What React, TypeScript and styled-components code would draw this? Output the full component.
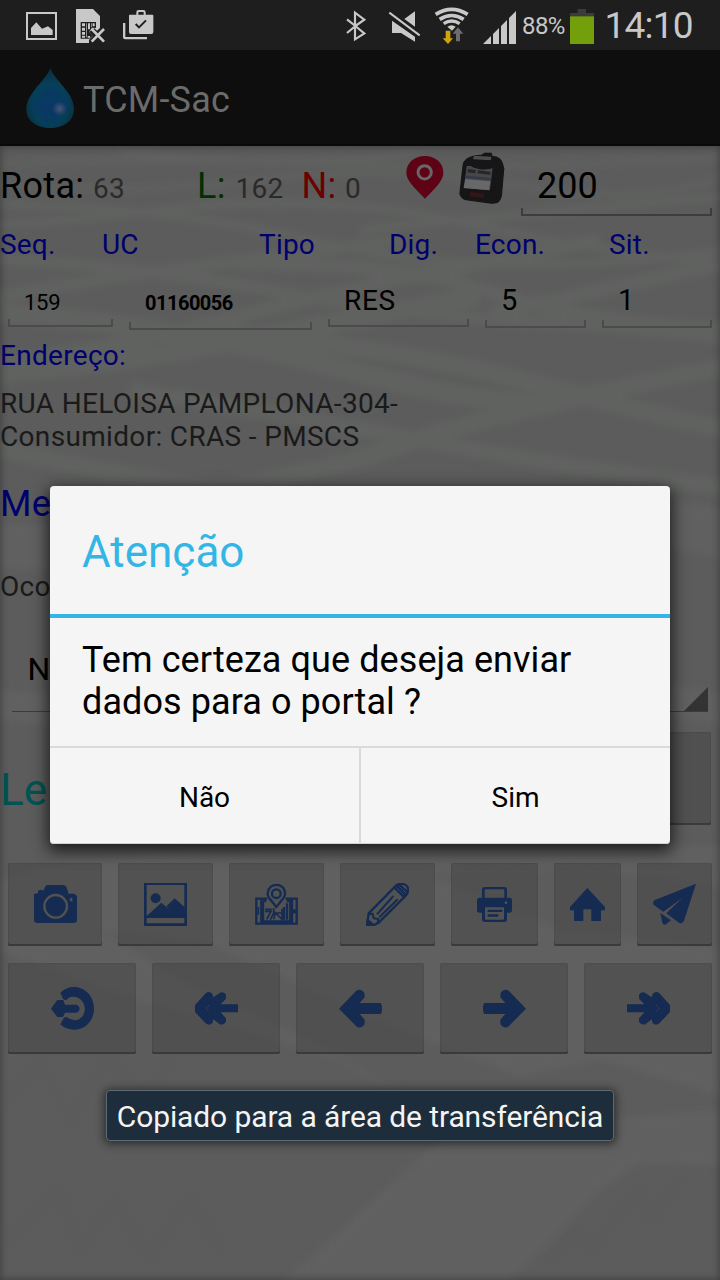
import React from "react";
import styled, { createGlobalStyle } from "styled-components";

const GlobalStyle = createGlobalStyle`
  *, *::before, *::after { box-sizing: border-box; }
  html, body { margin: 0; padding: 0; background: #5c5c5c; }
  body { font-family: Roboto, "Liberation Sans", sans-serif; overflow: hidden; }
  button { font: inherit; color: inherit; border: 0; padding: 0; margin: 0; background: none; }
`;

const NAVY = "#152b52";

const Phone = styled.div`
  position: relative;
  width: 720px;
  height: 1280px;
  overflow: hidden;
  display: flex;
  flex-direction: column;
`;

const StatusBar = styled.header`
  display: flex;
  height: 50px;
  flex: none;
  background: #1e1e1e;
  color: #c8c8c8;
  svg { display: block; flex: none; }
`;

const Percent = styled.span`
  width: 48px;
  font-size: 24px;
  line-height: 53px;
  letter-spacing: -0.6px;
  white-space: nowrap;
`;

const Clock = styled.span`
  margin-left: 10.5px;
  font-size: 37px;
  line-height: 51px;
  letter-spacing: -0.8px;
  white-space: nowrap;
`;

const ActionBar = styled.div`
  display: flex;
  align-items: center;
  height: 96px;
  flex: none;
  padding: 2px 0 0 25px;
  background: #0e0e0e;
  border-bottom: 2px solid #090909;
`;

const AppTitle = styled.h1`
  margin: 3px 0 0 8px;
  font-size: 36px;
  font-weight: 400;
  line-height: 42px;
  letter-spacing: 0.2px;
  color: #6b6b6b;
`;

const Content = styled.main`
  position: relative;
  flex: 1;
  display: flex;
  flex-direction: column;
  background: #5b5c5b;
  &::after {
    content: "";
    position: absolute;
    inset: 0;
    pointer-events: none;
    box-shadow: inset 0 0 7px 1px rgba(30, 30, 30, 0.45);
  }
`;

const Backdrop = styled.svg`
  position: absolute;
  inset: 0;
`;

const Form = styled.div`
  position: relative;
  display: flex;
  flex-direction: column;
`;

const Text = styled.span<{ $size?: number; $color?: string; $bold?: boolean; $track?: number }>`
  display: block;
  font-size: ${(p) => p.$size ?? 28}px;
  line-height: ${(p) => Math.round((p.$size ?? 28) * 1.1719)}px;
  font-weight: ${(p) => (p.$bold ? 700 : 400)};
  letter-spacing: ${(p) => p.$track ?? 0.3}px;
  color: ${(p) => p.$color ?? "#1a1a1a"};
  white-space: nowrap;
`;

const CounterRow = styled.div`
  display: grid;
  grid-template-columns: 93px 104px 38.5px 66px 43.5px 61px 52px 63px 191px;
  align-items: baseline;
  height: 70px;
  padding-top: 19px;
  svg { display: block; align-self: start; }
`;

const Field = styled.div<{ $indent: number; $h: number; $strong?: boolean }>`
  position: relative;
  display: flex;
  align-items: baseline;
  height: ${(p) => p.$h}px;
  padding-left: ${(p) => p.$indent}px;
  &::after {
    content: "";
    position: absolute;
    left: 0;
    right: 0;
    bottom: 0;
    height: 8px;
    border: solid ${(p) => (p.$strong ? "#3d3d3d" : "#4b4b4b")};
    border-width: 0 2px 2px;
  }
`;

const LabelRow = styled.div`
  display: grid;
  grid-template-columns: 102px 157px 130px 86px 134px 1fr;
  margin-top: 12px;
`;

const ValueRow = styled.div`
  display: grid;
  grid-template-columns: 105px 183px 141px 101px 110px;
  column-gap: 16px;
  align-items: baseline;
  height: 54px;
  margin: 22px 0 0 8px;
`;

const Block = styled.div<{ $top: number; $left?: number }>`
  margin-top: ${(p) => p.$top}px;
  margin-left: ${(p) => p.$left ?? 0}px;
`;

const Spinner = styled.div`
  display: flex;
  justify-content: space-between;
  align-items: flex-end;
  height: 62px;
  margin: 47px 12px 0;
  padding-left: 15.5px;
  border-bottom: 1px solid #3c3c3c;
  svg { display: block; }
`;

const SpinnerText = styled(Text)`
  align-self: flex-start;
`;

const ReadingRow = styled.div`
  display: flex;
  justify-content: space-between;
  align-items: flex-start;
  margin: 20px 9px 0 0;
  height: 93px;
`;

const ReadingLabel = styled(Text)`
  margin-top: 32px;
`;

const Key = styled.button`
  display: flex;
  align-items: center;
  justify-content: center;
  background: rgba(66, 66, 66, 0.48);
  border-radius: 2px;
  box-shadow: inset 0 -2px 0 #3a3a3a, inset 0 0 1px 1px rgba(50, 50, 50, 0.15);
  svg { display: block; flex: none; }
`;

const ReadingKey = styled(Key)`
  width: 320px;
  height: 93px;
`;

const ToolRow = styled.nav`
  display: grid;
  grid-template-columns: 94px 95px 95px 95px 87px 67px 75px;
  column-gap: 16px;
  height: 83px;
  margin: 38px 8px 0;
`;

const NavRow = styled.nav`
  display: grid;
  grid-template-columns: repeat(5, 128px);
  column-gap: 16px;
  height: 91px;
  margin: 17px 8px 0;
`;

const Dialog = styled.section`
  position: absolute;
  left: 50px;
  top: 486px;
  width: 620px;
  height: 358px;
  display: flex;
  flex-direction: column;
  background: #f5f5f5;
  border-radius: 4px;
  box-shadow: 0 5px 16px 2px rgba(0, 0, 0, 0.7), inset 0 -1px 0 #d2d2d2;
`;

const DialogTitle = styled.h2`
  margin: 0;
  height: 132px;
  padding: 40px 32px 0;
  font-size: 44px;
  line-height: 52px;
  font-weight: 400;
  color: #33b5e5;
  border-bottom: 4px solid #33b5e5;
`;

const DialogMessage = styled.p`
  margin: 0;
  height: 128px;
  padding: 21px 32px 0;
  font-size: 36px;
  line-height: 42px;
  letter-spacing: 0.08px;
  color: #000;
  white-space: nowrap;
`;

const DialogActions = styled.div`
  display: grid;
  grid-template-columns: 1fr 1fr;
  flex: 1;
  border-top: 2px solid #dadada;
`;

const DialogButton = styled.button`
  font-size: 28px;
  line-height: 33px;
  color: #000;
  padding-top: 2px;
  &:first-child { border-right: 1px solid #dadada; }
  & + & { border-left: 1px solid #dadada; }
`;

const Toast = styled.div`
  position: absolute;
  left: 106px;
  top: 1090px;
  width: 508px;
  height: 51px;
  display: flex;
  align-items: center;
  justify-content: center;
  padding-top: 2px;
  border: 1px solid #5d6a74;
  border-radius: 4px;
  background: #1e2d3b;
  color: #f4f4f4;
  font-size: 30px;
  line-height: 35px;
  letter-spacing: -0.11px;
  white-space: nowrap;
  box-shadow: 0 1px 9px 2px rgba(20, 20, 20, 0.65);
`;

const NotificationIcons = () => (
  <svg width="346" height="50" viewBox="0 0 1038 150" fill="#c8c8c8">
    <path fillRule="evenodd" d="M78 36H171V120H78ZM84 42V114H165V42Z" />
    <path d="M93 105V84L109 67L126 86L144 79L158 90V105Z" />
    <path d="M228 27H279L300 48V84L291 92L283 85L267 96L278 108L267 120V129H228Z" />
    <path fill="#1e1e1e" d="M242 66H288V84L276 83L267 96L278 107L268 116H242Z" />
    <path d="M246 70H255V79H246ZM259 70H261V112H259ZM264 70H270V88H264ZM273 70H275V82H273ZM278 70H284V79H278ZM246 83H255V92H246ZM246 96H255V104H246ZM246 107H255V113H246ZM263 108H270V113H263Z" />
    <path stroke="#c8c8c8" strokeWidth="8" d="M275 87L312 125M312 87L275 125" />
    <path fillRule="evenodd" d="M389 44H409V37Q409 30 416 30H430Q437 30 437 37V44H457Q460 44 460 47V96Q460 102 454 102H393Q387 102 387 96V47Q387 44 389 44ZM415 44H431V37Q431 36 429 36H417Q415 36 415 38Z" />
    <path fill="none" stroke="#1e1e1e" strokeWidth="6" d="M407 72L417 82L438 61" />
    <path d="M369 69H376V111H441V118H375Q369 118 369 112Z" />
  </svg>
);

const RadioIcons = () => (
  <svg width="176" height="50" viewBox="48 0 528 150" fill="#c8c8c8">
    <path fill="none" stroke="#c8c8c8" strokeWidth="6.5" d="M51 58L76 78L51 99M76 78L103 100L75 118V38L103 59L76 78" />
    <path d="M255 34V80L223 57ZM186 62L255 110V125L213 99H186Z" />
    <path stroke="#1e1e1e" strokeWidth="7" d="M178 45L264 112" />
    <path stroke="#c8c8c8" strokeWidth="6" d="M178 38L269 106" />
    <g fill="none" stroke="#c8c8c8">
      <path strokeWidth="11" d="M317 43Q365 13 413 43" />
      <path strokeWidth="11" d="M329 58Q365 35 401 58" />
      <path strokeWidth="10" d="M341 71Q365 55 389 71" />
    </g>
    <path d="M352 80Q365 71 377 80L366 92Z" />
    <path fill="#d0a50c" d="M347 92H361V115H369L354 132L338 115H347Z" />
    <path fill="#6d6d6d" d="M384 82L400 101H390V124H378V101H368Z" />
    <path d="M459 132L483 108V132ZM489 102L507 84V132H489ZM513 78L531 60V132H513ZM537 54L558 33V132H537Z" />
  </svg>
);

const BatteryIcon = () => (
  <svg width="24" height="50" viewBox="720 0 72 150">
    <path fill="#3b3b3b" d="M743 27H768V39H792V50H720V39H743Z" />
    <path fill="#739f0b" d="M720 49H792V132H720Z" />
  </svg>
);

const DropLogo = () => (
  <svg width="50" height="62" viewBox="75 201 150 186">
    <defs>
      <radialGradient id="drop" cx="0.5" cy="0.6" r="0.55">
        <stop offset="0" stopColor="#073b60" />
        <stop offset="0.65" stopColor="#063f58" />
        <stop offset="1" stopColor="#0b2f40" />
      </radialGradient>
      <radialGradient id="glint">
        <stop offset="0" stopColor="#4b5578" />
        <stop offset="1" stopColor="#4b5578" stopOpacity="0" />
      </radialGradient>
    </defs>
    <path fill="url(#drop)" d="M151 204C162 240 222 276 222 327C222 364 190 384 151 384C111 384 79 364 79 327C79 278 140 240 151 204Z" />
    <g fill="#0c3768" opacity="0.75">
      <path d="M121 294Q124 268 151 267Q178 268 181 294ZM121 299H181V346H171V370H158V346H145V370H132V346H121Z" />
      <rect x="101" y="299" width="15" height="41" rx="7" />
      <rect x="186" y="296" width="15" height="41" rx="7" />
    </g>
    <circle cx="179" cy="326" r="22" fill="url(#glint)" />
  </svg>
);

const PinSvg = styled.svg`
  margin-top: -10px;
`;

const PrinterSvg = styled.svg`
  margin-top: -14px;
`;

const PinIcon = () => (
  <PinSvg width="38" height="44" viewBox="140 27 112 132">
    <path fill="#5e0216" d="M196 30C226 30 251 50 251 80C251 104 228 124 196 158C164 124 140 104 140 80C140 50 165 30 196 30Z" />
    <circle cx="195" cy="79" r="20" fill="none" stroke="#676767" strokeWidth="9" />
  </PinSvg>
);

const PrinterDeviceIcon = () => (
  <PrinterSvg width="48" height="54" viewBox="292 15 144 162">
    <defs>
      <filter id="device" x="-5%" y="-5%" width="110%" height="110%">
        <feGaussianBlur stdDeviation="1.6" />
      </filter>
    </defs>
    <g filter="url(#device)">
      <path fill="#141213" d="M371 20L393 20L395 29Q421 32 426 50L431 67L424 148Q420 176 392 173L316 163Q300 158 296 143L306 55Q312 28 363 26Z" />
      <path fill="#4c4e50" d="M340 29L393 32L390 43L337 40Z" />
      <path fill="#454648" d="M318 60L330 60Q357 76 396 67L388 133L309 126Z" />
      <path fill="#686869" d="M314 99L389 106L385 133L309 126Z" />
      <path fill="#25262a" d="M323 69L345 72L344 82L320 79ZM352 73L390 78L389 86L351 82Z" />
      <path fill="#35384a" d="M317 89L390 96V103L315 96Z" />
      <path fill="#351617" d="M328 138L370 143L369 156L327 151Z" />
    </g>
  </PrinterSvg>
);

const ToolIcon = ({ x, y, children }: { x: number; y: number; children: React.ReactNode }) => (
  <svg width="43" height="43" viewBox={`${x} ${y} 129 129`} fill={NAVY} stroke="none">
    {children}
  </svg>
);

const CameraIcon = () => (
  <ToolIcon x={102} y={99}>
    <path d="M102 132L114 130V122L122 119L130 122L137 107L143 105H192L199 110L206 131H223L231 138V210Q231 219 220 219H113Q102 219 102 210Z" />
    <circle cx="167" cy="169" r="34" fill="none" stroke="#505151" strokeWidth="7" />
    <path fill="#505151" d="M207 149L217 141V156Z" />
  </ToolIcon>
);

const PictureIcon = () => (
  <ToolIcon x={432} y={99}>
    <path fillRule="evenodd" d="M432 99H561V228H432ZM440 105V198L484 158L509 179L499 169L524 145L553 171V105ZM440 204V220H553V204Z" />
    <circle cx="467" cy="145" r="15" />
  </ToolIcon>
);

const MapIcon = () => (
  <ToolIcon x={765} y={99}>
    <g fill="none" stroke={NAVY} strokeWidth="7">
      <path d="M802 146H769V221H890V146H857M784 146V221M789 153H799M789 153V214H871V153H860M876 146V221M861 160V209M852 171V209" />
      <path strokeWidth="5" d="M775 171V194M795 184H813L800 208M824 184L811 209M821 174V189H846M821 208L826 188L845 207M796 178H815M846 177V212" />
      <path d="M829 171L808 145Q802 137 803 130C805 96 854 96 855 130Q856 137 850 145Z" />
      <circle cx="829" cy="131" r="13" />
    </g>
    <path d="M876 178H892V190H876Z" />
  </ToolIcon>
);

const PencilIcon = () => (
  <ToolIcon x={108} y={99}>
    <g fill="none" stroke={NAVY} strokeWidth="7" strokeLinejoin="round">
      <path d="M111 225L116 190L195 110Q207 98 220 102Q237 108 234 123Q233 132 225 139L146 218L132 225Z" />
      <path d="M193 112L224 143M200 107L229 136M207 103L234 128" />
      <path strokeWidth="6" d="M117 193L128 191L131 205L145 207L143 218M141 193L190 138M148 202L203 148" />
    </g>
    <path d="M110 207L122 213L132 222L109 228Z" />
  </ToolIcon>
);

const PrintIcon = () => (
  <ToolIcon x={429} y={99}>
    <path fillRule="evenodd" d="M465 111H523Q531 111 531 119V143H538Q546 143 546 151V181Q546 188 538 188H531V208Q531 216 523 216H465Q456 216 456 208V188H449Q441 188 441 181V151Q441 143 449 143H456V119Q456 111 465 111ZM466 118Q464 118 464 120V143H523V120Q523 118 521 118ZM465 172V206Q465 209 468 209H519Q522 209 522 206V172Z" />
    <path d="M473 179H517V186H473ZM473 193H505V200H473Z" />
    <circle cx="528" cy="158" r="4" fill="#505151" />
  </ToolIcon>
);

const HomeIcon = () => (
  <ToolIcon x={708} y={99}>
    <path d="M772 114L825 171V181H813V213H784V178H760V213H732V181H720V171Z" />
  </ToolIcon>
);

const SendIcon = () => (
  <ToolIcon x={969} y={99}>
    <path d="M1098 101L1062 212Q1057 222 1048 219L1009 190L1057 144L1000 185L971 164Q967 155 973 151ZM991 189L1023 211L1008 223Q1000 227 997 218Z" />
  </ToolIcon>
);

const ExitIcon = () => (
  <ToolIcon x={153} y={411}>
    <path d="M181 428Q198 411 222 411C256 411 282 440 282 476C282 512 256 539 222 539Q198 539 181 523L192 503L199 501Q232 523 250 495C263 469 247 438 217 440Q205 441 198 451L190 448Z" />
    <path d="M153 476L172 450H190L195 464H230Q239 468 239 476Q239 484 230 488H195L189 501H172Z" />
  </ToolIcon>
);

const FastBack = () => (
  <>
    <path d="M585 465L617 430Q627 422 637 431L640 442L658 430Q668 422 678 434V446L662 463H714V487H662L678 505V516Q668 528 657 521L640 508L637 520Q627 528 617 520L585 486Z" />
    <path d="M622 450H650V500H622Z" />
    <path fill="none" stroke="#505151" strokeWidth="3" strokeDasharray="3 3" d="M626 466L618 475L626 485" />
  </>
);

const ArrowShape = () => (
  <path d="M27 476L78 423Q87 415 98 423Q104 427 104 435V442L89 459H151Q156 461 156 476Q156 490 151 492H89L104 509V518Q104 526 98 529Q87 537 78 528Z" />
);

const WaterTexture = () => (
  <Backdrop width="720" height="1134" viewBox="0 146 720 1134" fill="none">
    <defs>
      <filter id="soft" filterUnits="userSpaceOnUse" x="-20" y="130" width="760" height="1170">
        <feGaussianBlur stdDeviation="3" />
      </filter>
    </defs>
    <g filter="url(#soft)" stroke="#616261">
      <path strokeWidth="5" d="M-10 164Q160 158 330 164T730 158M-10 184Q130 196 260 180T520 186T730 174M120 152Q300 172 420 152" />
      <path strokeWidth="8" d="M-10 225Q80 222 190 206Q350 196 460 222T730 264M-10 204Q170 206 330 244T730 250M360 230Q520 214 730 196" />
      <path strokeWidth="12" d="M-10 298Q90 280 200 266T400 240M-10 258Q150 268 280 292T500 320T730 338" />
      <path strokeWidth="14" d="M-10 364Q120 348 240 316Q380 280 490 262L600 240M240 264Q400 262 490 292T730 330M490 314Q620 286 730 262" />
      <path strokeWidth="20" d="M-10 374Q120 364 240 340Q360 318 480 296M-10 312Q180 326 330 366T560 404" />
      <path strokeWidth="18" d="M-10 446Q120 478 220 488Q340 470 440 432Q580 394 730 366M200 330Q400 348 520 380T730 430" />
      <path strokeWidth="16" d="M130 390Q280 414 420 440T730 488" />
    </g>
    <g filter="url(#soft)" fill="#616161">
      <path d="M0 525H60V570L0 568ZM0 690L60 694V726L0 720ZM660 500L730 510V560L660 545ZM660 684L730 694V726L660 714Z" />
      <path d="M0 880L60 862L300 846H740V890L600 868L420 872L560 930L740 950V1100L600 1060L520 1076L400 1030L200 940L100 930L180 980L320 1045L460 1130L720 1110V1166L640 1162L600 1190L500 1290H275L450 1130L340 1060L140 1000L0 952Z" />
    </g>
    <g filter="url(#soft)" stroke="#585958" strokeWidth="2" opacity="0.4">
      <path d="M5 1100L40 1060L70 1120L110 1055L145 1100L170 1060M10 1240L60 1190L80 1250L115 1200L150 1260L190 1195L220 1250M550 1260L575 1230L590 1250L640 1190L650 1220L680 1180" />
    </g>
  </Backdrop>
);

export default function App() {
  return (
    <>
      <GlobalStyle />
      <Phone>
        <StatusBar>
          <NotificationIcons />
          <RadioIcons />
          <Percent>88%</Percent>
          <BatteryIcon />
          <Clock>14:10</Clock>
        </StatusBar>
        <ActionBar>
          <DropLogo />
          <AppTitle>TCM-Sac</AppTitle>
        </ActionBar>
        <Content>
          <WaterTexture />
          <Form>
            <CounterRow>
              <Text $size={36} $color="#000">Rota:</Text>
              <Text $color="#2a2a2a">63</Text>
              <Text $size={36} $color="#002f00">L:</Text>
              <Text $color="#2a2a2a">162</Text>
              <Text $size={36} $color="#6c0000">N:</Text>
              <Text $color="#2a2a2a">0</Text>
              <PinIcon />
              <PrinterDeviceIcon />
              <Field $indent={16} $h={51} $strong>
                <Text $size={36} $color="#000" $track={0}>200</Text>
              </Field>
            </CounterRow>
            <LabelRow>
              {["Seq.", "UC", "Tipo", "Dig.", "Econ.", "Sit."].map((label) => (
                <Text key={label} $color="#00006c" $track={0.2}>{label}</Text>
              ))}
            </LabelRow>
            <ValueRow>
              <Field $indent={16} $h={37}><Text $size={22} $color="#000" $track={-0.3}>159</Text></Field>
              <Field $indent={16} $h={37.5}><Text $size={20} $color="#000" $bold $track={-0.5}>01160056</Text></Field>
              <Field $indent={16} $h={43}><Text $color="#000" $track={0.7}>RES</Text></Field>
              <Field $indent={16} $h={44.5}><Text $size={29} $color="#000">5</Text></Field>
              <Field $indent={16} $h={44.5}><Text $size={29} $color="#000">1</Text></Field>
            </ValueRow>
            <Block $top={2}><Text $color="#00006c">Endereço:</Text></Block>
            <Block $top={15}>
              <Text $track={0.33}>RUA HELOISA PAMPLONA-304-</Text>
              <Text $track={0.33}>Consumidor: CRAS - PMSCS</Text>
            </Block>
            <Block $top={30}><Text $size={36} $color="#00006c">Me</Text></Block>
            <Block $top={45}><Text>Oco</Text></Block>
            <Spinner>
              <SpinnerText $size={32} $color="#000">N</SpinnerText>
              <svg width="24" height="24" viewBox="0 0 24 24"><path fill="#333" d="M24 0V24H0Z" /></svg>
            </Spinner>
            <ReadingRow>
              <ReadingLabel $size={44} $color="#005454" $track={0}>Le</ReadingLabel>
              <ReadingKey />
            </ReadingRow>
            <ToolRow>
              <Key><CameraIcon /></Key>
              <Key><PictureIcon /></Key>
              <Key><MapIcon /></Key>
              <Key><PencilIcon /></Key>
              <Key><PrintIcon /></Key>
              <Key><HomeIcon /></Key>
              <Key><SendIcon /></Key>
            </ToolRow>
            <NavRow>
              <Key><ExitIcon /></Key>
              <Key><ToolIcon x={585} y={411}><FastBack /></ToolIcon></Key>
              <Key><ToolIcon x={27} y={411}><ArrowShape /></ToolIcon></Key>
              <Key><ToolIcon x={27} y={411}><g transform="translate(183 0) scale(-1 1)"><ArrowShape /></g></ToolIcon></Key>
              <Key><ToolIcon x={585} y={411}><g transform="translate(1299 0) scale(-1 1)"><FastBack /></g></ToolIcon></Key>
            </NavRow>
          </Form>
        </Content>
        <Dialog role="dialog">
          <DialogTitle>Atenção</DialogTitle>
          <DialogMessage>
            Tem certeza que deseja enviar
            <br />
            dados para o portal ?
          </DialogMessage>
          <DialogActions>
            <DialogButton>Não</DialogButton>
            <DialogButton>Sim</DialogButton>
          </DialogActions>
        </Dialog>
        <Toast>Copiado para a área de transferência</Toast>
      </Phone>
    </>
  );
}
